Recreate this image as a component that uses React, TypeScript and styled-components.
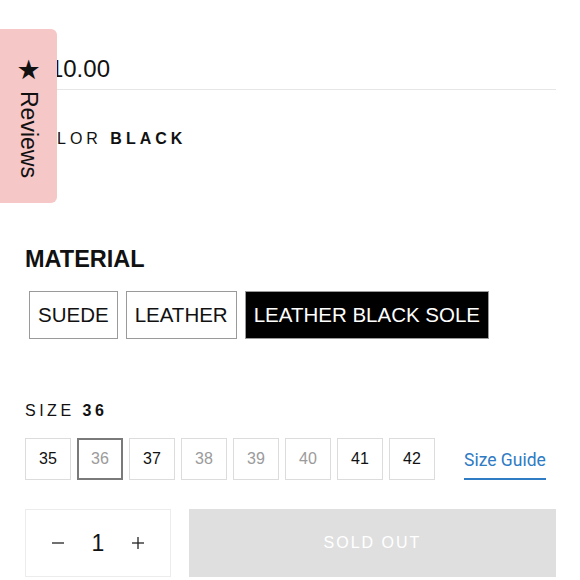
import React from "react";
import styled, { createGlobalStyle } from "styled-components";

const Global = createGlobalStyle`
  html, body { margin: 0; padding: 0; background: #fff; }
  body { font-family: "Liberation Sans", Arial, sans-serif; color: #111; }
  * { box-sizing: border-box; }
`;

const Page = styled.div`
  position: relative;
  width: 580px;
  height: 580px;
  overflow: hidden;
  padding: 55px 24px 0 25px;
`;

const ReviewsTab = styled.div`
  position: absolute;
  left: 0;
  top: 29px;
  width: 57px;
  height: 174px;
  background: #f5c7c7;
  border-radius: 0 6px 6px 0;
  display: flex;
  flex-direction: column;
  align-items: center;
  padding-top: 29px;
  gap: 9px;
  color: #111;
  z-index: 2;
`;

const Star = styled.span`
  font-family: "DejaVu Sans", sans-serif;
  font-size: 27px;
  line-height: 24px;
`;

const TabLabel = styled.span`
  writing-mode: vertical-rl;
  font-size: 23px;
  line-height: 23px;
`;

const PriceRow = styled.div`
  font-size: 24px;
  line-height: 28px;
  padding-bottom: 6px;
  border-bottom: 1px solid #e6e6e6;
`;

const OptionLabel = styled.div<{ $tracking: number; $top: number }>`
  margin-top: ${(p) => p.$top}px;
  font-size: 16px;
  line-height: 20px;
  letter-spacing: ${(p) => p.$tracking}px;
  text-transform: uppercase;
  strong { font-weight: 700; }
`;

const SectionTitle = styled.div`
  margin-top: 96px;
  font-size: 23.5px;
  line-height: 28px;
  font-weight: 700;
`;

const MaterialList = styled.div`
  display: flex;
  gap: 8px;
  padding: 0 4px;
  margin-top: 18px;
`;

const MaterialButton = styled.div<{ $selected?: boolean }>`
  height: 48px;
  padding: 0 8px;
  display: flex;
  align-items: center;
  border: 1px solid #9a9a9a;
  font-size: 20.5px;
  background: ${(p) => (p.$selected ? "#000" : "#fff")};
  color: ${(p) => (p.$selected ? "#fff" : "#111")};
`;

const SizeRow = styled.div`
  display: flex;
  align-items: center;
  gap: 6px;
  margin-top: 17px;
`;

const SizeBox = styled.div<{ $available: boolean; $selected?: boolean }>`
  width: 46px;
  height: 42px;
  display: flex;
  align-items: center;
  justify-content: center;
  font-size: 16px;
  border: ${(p) => (p.$selected ? "2px solid #7a7a7a" : "1px solid #dcdcdc")};
  color: ${(p) => (p.$available ? "#111" : "#9b9b9b")};
`;

const SizeGuide = styled.a`
  align-self: flex-end;
  margin-left: 23px;
  font-family: Roboto, "Liberation Sans", sans-serif;
  font-size: 17.5px;
  line-height: 20px;
  color: #2f7bc4;
  text-decoration: none;
  padding-bottom: 8px;
  border-bottom: 2px solid #2f7bc4;
`;

const BuyRow = styled.div`
  display: flex;
  gap: 18px;
  height: 68px;
  margin-top: 29px;
`;

const QtyBox = styled.div`
  width: 146px;
  border: 1px solid #ececec;
  display: flex;
  align-items: center;
  justify-content: center;
`;

const QtyCell = styled.div`
  width: 40px;
  display: flex;
  justify-content: center;
  align-items: center;
  font-size: 23px;
  color: #111;
`;

const SoldOut = styled.div`
  flex: 1;
  background: #dfdfdf;
  color: #fff;
  display: flex;
  align-items: center;
  justify-content: center;
  font-size: 16px;
  letter-spacing: 2px;
`;

const sizes = [
  { v: "35", a: true },
  { v: "36", a: false, s: true },
  { v: "37", a: true },
  { v: "38", a: false },
  { v: "39", a: false },
  { v: "40", a: false },
  { v: "41", a: true },
  { v: "42", a: true },
];

const Minus = () => (
  <svg width="12" height="12" viewBox="0 0 12 12">
    <line x1="0" y1="6" x2="12" y2="6" stroke="#222" strokeWidth="1.3" />
  </svg>
);

const Plus = () => (
  <svg width="12" height="12" viewBox="0 0 12 12">
    <line x1="0" y1="6" x2="12" y2="6" stroke="#222" strokeWidth="1.3" />
    <line x1="6" y1="0" x2="6" y2="12" stroke="#222" strokeWidth="1.3" />
  </svg>
);

export default function App() {
  return (
    <>
      <Global />
      <Page>
        <ReviewsTab>
          <Star>★</Star>
          <TabLabel>Reviews</TabLabel>
        </ReviewsTab>
        <PriceRow>$110.00</PriceRow>
        <OptionLabel $tracking={4} $top={39}>
          Color <strong>Black</strong>
        </OptionLabel>
        <SectionTitle>MATERIAL</SectionTitle>
        <MaterialList>
          <MaterialButton>SUEDE</MaterialButton>
          <MaterialButton>LEATHER</MaterialButton>
          <MaterialButton $selected>LEATHER BLACK SOLE</MaterialButton>
        </MaterialList>
        <OptionLabel $tracking={3.5} $top={62}>
          Size <strong>36</strong>
        </OptionLabel>
        <SizeRow>
          {sizes.map((s) => (
            <SizeBox key={s.v} $available={s.a} $selected={s.s}>
              {s.v}
            </SizeBox>
          ))}
          <SizeGuide>Size Guide</SizeGuide>
        </SizeRow>
        <BuyRow>
          <QtyBox>
            <QtyCell>
              <Minus />
            </QtyCell>
            <QtyCell>1</QtyCell>
            <QtyCell>
              <Plus />
            </QtyCell>
          </QtyBox>
          <SoldOut>SOLD OUT</SoldOut>
        </BuyRow>
      </Page>
    </>
  );
}
